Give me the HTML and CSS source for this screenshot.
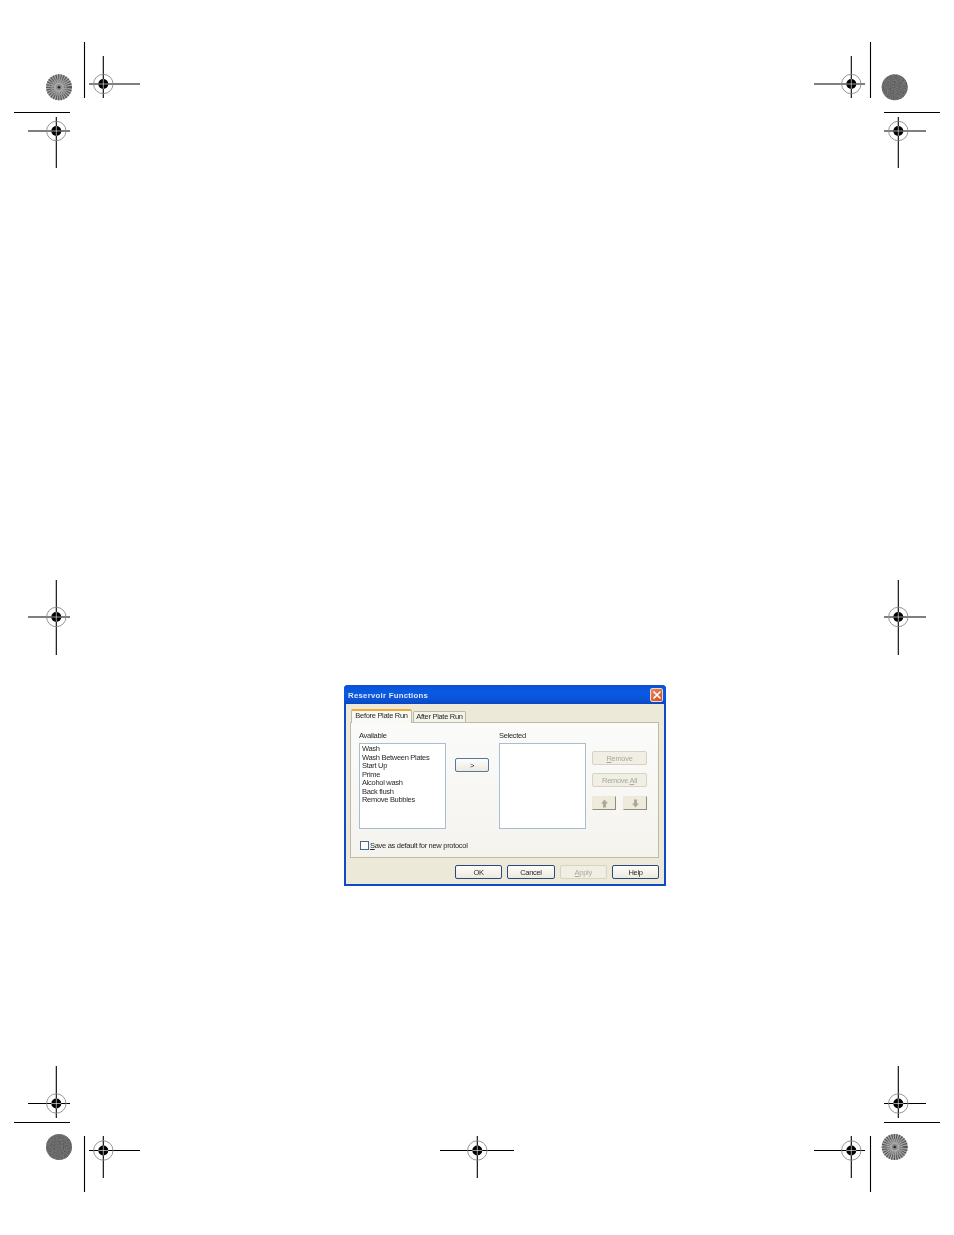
FILE: index.html
```html
<!DOCTYPE html>
<html lang="en">
<head>
    <meta charset="UTF-8">
    <meta name="viewport" content="width=device-width, initial-scale=1.0">
    <title>Reservoir Functions</title>
    <link rel="stylesheet" href="styles.css">
</head>
<body>
    <!-- printer's marks, placed on the page like on a sheet -->
    <svg class="marks" width="954" height="1235" viewBox="0 0 954 1235">
        <defs>
            <filter id="grain" x="0" y="0" width="100%" height="100%">
                <feTurbulence type="fractalNoise" baseFrequency="0.7" numOctaves="2" seed="4"/>
                <feColorMatrix values="0 0 0 0 0  0 0 0 0 0  0 0 0 0 0  0.9 0 0 0 -0.2"/>
                <feComposite in2="SourceGraphic" operator="in"/>
                <feMerge>
                    <feMergeNode in="SourceGraphic"/>
                    <feMergeNode/>
                </feMerge>
            </filter>
            <g id="target">
                <circle r="9.7" fill="none" stroke="#8a8a8a" stroke-width="0.9"/>
                <circle r="5" fill="#000"/>
                <path d="M-5 0H5M0 -5V5" stroke="#fff" stroke-width="0.6"/>
            </g>
            <g id="burst">
                <circle r="13" fill="#a8a8a8"/>
                <circle r="10.5" fill="none" stroke="#555" stroke-width="5" stroke-dasharray="1.1 1.2"/>
                <circle r="6.5" fill="none" stroke="#777" stroke-width="3.5" stroke-dasharray="0.9 1"/>
                <circle r="3" fill="#888"/>
                <circle r="1.2" fill="#222"/>
            </g>
            <g id="disc">
                <circle r="13" fill="#7a7a7a" filter="url(#grain)"/>
            </g>
        </defs>

        <g stroke="#000" stroke-width="1.1">
            <path d="M84.5 42V98M14 112.5H70"/>
            <path d="M870.5 42V98M884 112.5H940"/>
            <path d="M14 1122.5H70M84.5 1136V1192"/>
            <path d="M884 1122.5H940M870.5 1136V1192"/>

            <path d="M89 84H140M103.3 56V98"/>
            <path d="M28 131H70M56.3 117V168"/>
            <path d="M814 84H865M851.3 56V98"/>
            <path d="M884 131H926M898.3 117V168"/>
            <path d="M28 617H70M56.3 580V655"/>
            <path d="M884 617H926M898.3 580V655"/>
            <path d="M28 1103.5H70M56.3 1066V1118"/>
            <path d="M884 1103.5H926M898.3 1066V1118"/>
            <path d="M89 1150.5H140M103.3 1136V1178"/>
            <path d="M440 1150.5H514M477.3 1136V1178"/>
            <path d="M814 1150.5H865M851.3 1136V1178"/>
        </g>

        <use href="#target" x="103.3" y="84"/>
        <use href="#target" x="56.3" y="131"/>
        <use href="#target" x="851.3" y="84"/>
        <use href="#target" x="898.3" y="131"/>
        <use href="#target" x="56.3" y="617"/>
        <use href="#target" x="898.3" y="617"/>
        <use href="#target" x="56.3" y="1103.5"/>
        <use href="#target" x="898.3" y="1103.5"/>
        <use href="#target" x="103.3" y="1150.5"/>
        <use href="#target" x="477.3" y="1150.5"/>
        <use href="#target" x="851.3" y="1150.5"/>

        <use href="#burst" x="59" y="87.3"/>
        <use href="#disc" x="894.7" y="87.3"/>
        <use href="#disc" x="59" y="1147"/>
        <use href="#burst" x="894.7" y="1147"/>
    </svg>

    <div class="dialog">
        <div class="titlebar">
            <span class="title">Reservoir Functions</span>
            <span class="close">
                <svg width="10" height="10" viewBox="0 0 10 10"><path d="M1.5 1.5L8.5 8.5M8.5 1.5L1.5 8.5" stroke="#fff" stroke-width="1.7"/></svg>
            </span>
        </div>
        <div class="dialog-body">
            <div class="tabs">
                <div class="tab active">Before Plate Run</div>
                <div class="tab">After Plate Run</div>
            </div>
            <div class="panel">
                <div class="columns">
                    <div class="column">
                        <div class="field-label">Available</div>
                        <ul class="listbox">
                            <li>Wash</li>
                            <li>Wash Between Plates</li>
                            <li>Start Up</li>
                            <li>Prime</li>
                            <li>Alcohol wash</li>
                            <li>Back flush</li>
                            <li>Remove Bubbles</li>
                        </ul>
                    </div>
                    <div class="move-col">
                        <button class="btn move">&gt;</button>
                    </div>
                    <div class="column">
                        <div class="field-label">Selected</div>
                        <ul class="listbox"></ul>
                    </div>
                    <div class="side-col">
                        <button class="btn side" disabled><span><u>R</u>emove</span></button>
                        <button class="btn side" disabled><span>Remove <u>A</u>ll</span></button>
                        <div class="arrows">
                            <button class="btn arrow" disabled>
                                <svg width="9" height="9" viewBox="0 0 9 9"><path d="M4.5 0.5L8 4.5H6V8.5H3V4.5H1Z" fill="#a9a99c"/></svg>
                            </button>
                            <button class="btn arrow" disabled>
                                <svg width="9" height="9" viewBox="0 0 9 9"><path d="M4.5 8.5L8 4.5H6V0.5H3V4.5H1Z" fill="#a9a99c"/></svg>
                            </button>
                        </div>
                    </div>
                </div>
                <label class="check-row">
                    <span class="checkbox"></span>
                    <span><u>S</u>ave as default for new protocol</span>
                </label>
            </div>
            <div class="footer">
                <button class="btn foot">OK</button>
                <button class="btn foot">Cancel</button>
                <button class="btn foot" disabled><span><u>A</u>pply</span></button>
                <button class="btn foot">Help</button>
            </div>
        </div>
    </div>
</body>
</html>
```

FILE: styles.css
```css
body {
    margin: 0;
    height: 1235px;
    background: #fff;
    font-family: "Liberation Sans", Arial, sans-serif;
    font-size: 7.5px;
    letter-spacing: -0.3px;
    color: #2a2a2a;
    overflow: hidden;
}
.marks {
    position: absolute;
    top: 0;
    left: 0;
}
.dialog {
    box-sizing: border-box;
    width: 322px;
    height: 201px;
    margin: 685px 0 0 344px;
    background: #ece9d8;
    border: 2px solid #0f4cc4;
    border-top: none;
    border-radius: 4px 4px 0 0;
    filter: blur(0.4px);
}
.titlebar {
    display: flex;
    align-items: center;
    justify-content: space-between;
    height: 19px;
    margin: 0 -2px;
    padding: 0 3px 0 4px;
    background: linear-gradient(#0a52d4 0%, #0a5ae4 40%, #0a54d8 75%, #0a46c0 100%);
    border-radius: 4px 4px 0 0;
}
.title {
    padding-top: 1px;
    color: #dfe8f6;
    font-weight: bold;
    font-size: 7.8px;
    letter-spacing: 0.25px;
}
.close {
    display: flex;
    align-items: center;
    justify-content: center;
    width: 13px;
    height: 14px;
    background: linear-gradient(135deg, #ea8a60, #d04a20);
    border: 1px solid #f0d8c8;
    border-radius: 2px;
    box-sizing: border-box;
}
.dialog-body {
    padding: 5px 0 0 4px;
}
.tabs {
    display: flex;
    align-items: flex-end;
    height: 13px;
    padding-left: 1px;
    position: relative;
    z-index: 1;
}
.tab {
    box-sizing: border-box;
    height: 11px;
    width: 53px;
    margin-left: 1px;
    padding-top: 1px;
    text-align: center;
    white-space: nowrap;
    background: #f4f3ea;
    border: 1px solid #bdbaa8;
    border-bottom: none;
    border-radius: 2px 2px 0 0;
    line-height: 8px;
}
.tab.active {
    height: 14px;
    width: 61px;
    margin: 0 0 -1px;
    background: #f9f9f5;
    border-top: 2px solid #f0a830;
}
.panel {
    box-sizing: border-box;
    width: 309px;
    height: 136px;
    padding: 8px 0 0 8px;
    background: linear-gradient(#fbfbfa, #f4f3ee);
    border: 1px solid #bdbaa8;
}
.columns {
    display: flex;
}
.field-label {
    height: 12px;
    line-height: 9px;
}
.listbox {
    box-sizing: border-box;
    width: 87px;
    height: 86px;
    margin: 0;
    padding: 1px 0 0 2px;
    list-style: none;
    background: #fff;
    border: 1px solid #a9bcd0;
}
.listbox li {
    height: 8.5px;
    line-height: 8.5px;
    white-space: nowrap;
}
.move-col {
    width: 53px;
    padding: 27px 0 0 9px;
    box-sizing: border-box;
}
.side-col {
    display: flex;
    flex-direction: column;
    gap: 8px;
    margin-left: 6px;
    padding-top: 20px;
}
.btn {
    box-sizing: border-box;
    padding: 0;
    font: inherit;
    letter-spacing: inherit;
    color: #2a2a2a;
    background: linear-gradient(#fdfdfb, #ece9e0);
    border: 1px solid #2c4a78;
    border-radius: 2px;
    display: flex;
    align-items: center;
    justify-content: center;
}
.btn:disabled {
    color: #a9a99c;
    background: #f1efe4;
    border-color: #d6d3c4;
}
.btn u {
    text-decoration-thickness: 0.5px;
}
.move {
    width: 34px;
    height: 14px;
    border-color: #5a7698;
}
.side {
    width: 55px;
    height: 14px;
}
.arrows {
    display: flex;
    gap: 7px;
    margin-top: 1px;
}
.arrow {
    width: 24px;
    height: 14px;
}
.btn.arrow:disabled {
    background: #eeebdc;
    border-color: #ece9d8 #8f8d80 #8f8d80 #ece9d8;
    border-radius: 0;
}
.check-row {
    display: flex;
    align-items: center;
    gap: 1px;
    margin-top: 12px;
    padding-left: 1px;
}
.checkbox {
    box-sizing: border-box;
    width: 9px;
    height: 9px;
    background: #fff;
    border: 1px solid #4a6a8c;
}
.footer {
    display: flex;
    gap: 5px;
    padding: 7px 0 0 105px;
}
.foot {
    width: 47.3px;
    height: 14px;
}
```
